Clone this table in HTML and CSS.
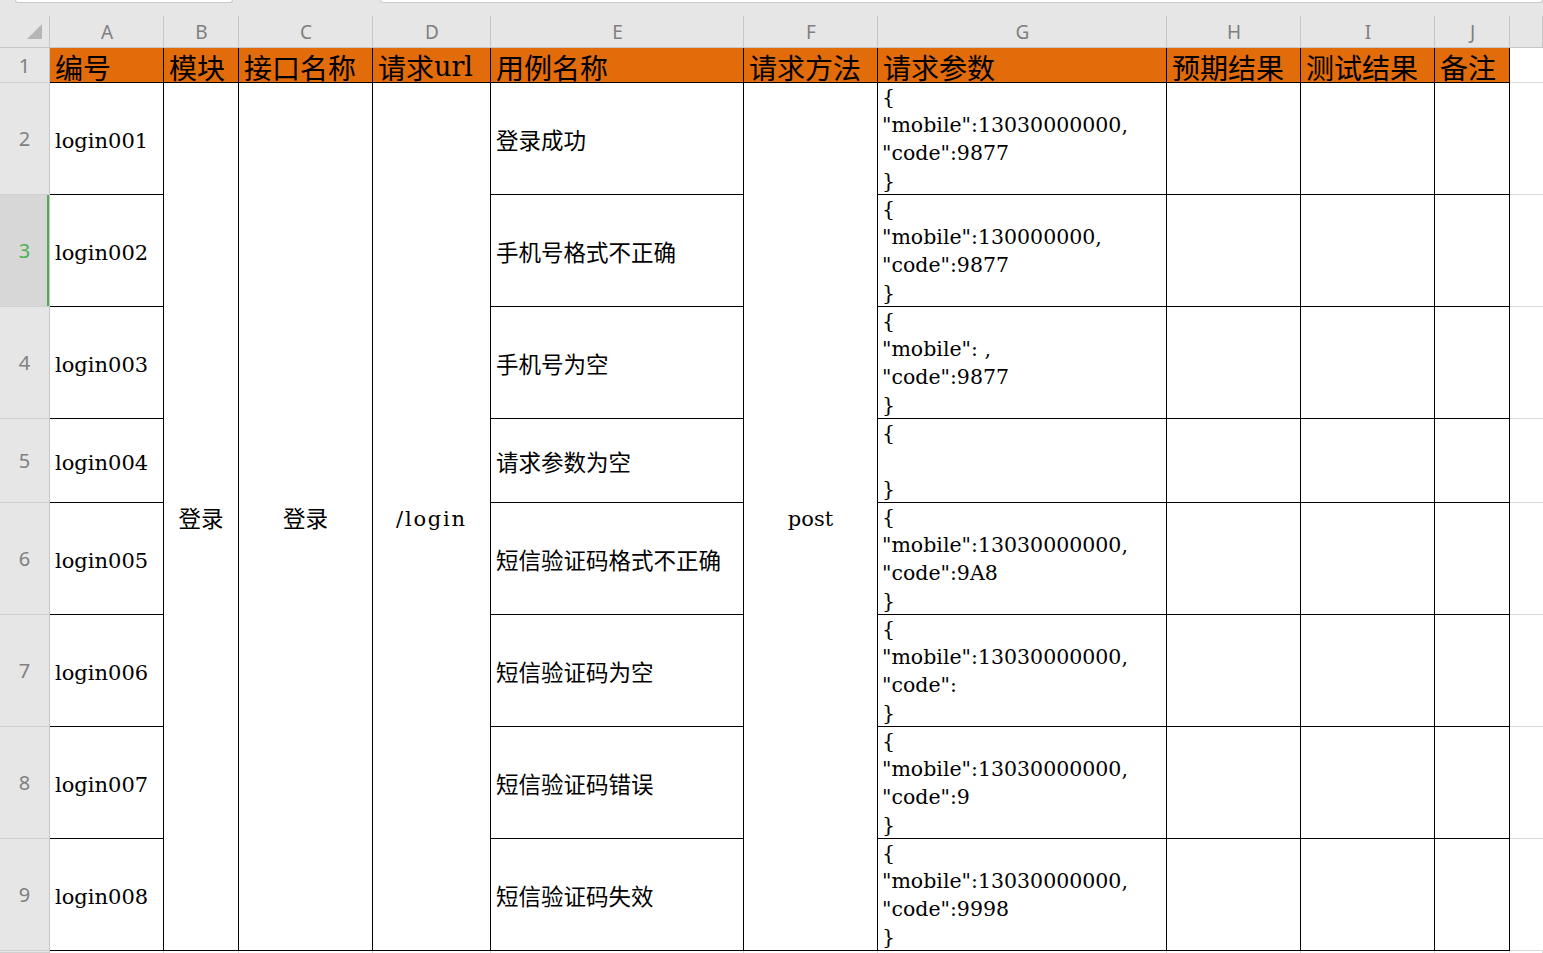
FILE: index.html
```html
<!DOCTYPE html>
<html lang="zh-CN">
<head>
<meta charset="utf-8">
<title>接口测试用例</title>
<link rel="stylesheet" href="styles.css">
</head>
<body>
<div class="topbar"><div class="tb tb1"></div><div class="tb tb2"></div></div>
<div class="sheet">
  <div class="corner"><svg width="49" height="44" viewBox="0 0 49 44"><polygon points="42,21 42,36 27,36" fill="#b6b6b6"/></svg></div>
  <div class="ch">A</div><div class="ch">B</div><div class="ch">C</div><div class="ch">D</div><div class="ch">E</div>
  <div class="ch">F</div><div class="ch">G</div><div class="ch">H</div><div class="ch">I</div><div class="ch">J</div><div class="ch"></div>

  <div class="rh">1</div>
  <div class="c hd">编号</div>
  <div class="c hd">模块</div>
  <div class="c hd">接口名称</div>
  <div class="c hd">请求<span class="hu">url</span></div>
  <div class="c hd">用例名称</div>
  <div class="c hd">请求方法</div>
  <div class="c hd">请求参数</div>
  <div class="c hd">预期结果</div>
  <div class="c hd">测试结果</div>
  <div class="c hd">备注</div>
  <div class="x"></div>

  <div class="rh">2</div>
  <div class="c lat">login001</div>
  <div class="c m cjk">登录</div>
  <div class="c m cjk">登录</div>
  <div class="c m lat wide">/login</div>
  <div class="c cjk">登录成功</div>
  <div class="c m lat">post</div>
  <div class="c js">{<br>"mobile":13030000000,<br>"code":9877<br>}</div>
  <div class="c"></div><div class="c"></div><div class="c"></div><div class="x"></div>

  <div class="rh sel">3</div>
  <div class="c lat">login002</div>
  <div class="c cjk">手机号格式不正确</div>
  <div class="c js">{<br>"mobile":130000000,<br>"code":9877<br>}</div>
  <div class="c"></div><div class="c"></div><div class="c"></div><div class="x"></div>

  <div class="rh">4</div>
  <div class="c lat">login003</div>
  <div class="c cjk">手机号为空</div>
  <div class="c js">{<br>"mobile": ,<br>"code":9877<br>}</div>
  <div class="c"></div><div class="c"></div><div class="c"></div><div class="x"></div>

  <div class="rh">5</div>
  <div class="c lat">login004</div>
  <div class="c cjk">请求参数为空</div>
  <div class="c js">{<br><br>}</div>
  <div class="c"></div><div class="c"></div><div class="c"></div><div class="x"></div>

  <div class="rh">6</div>
  <div class="c lat">login005</div>
  <div class="c cjk">短信验证码格式不正确</div>
  <div class="c js">{<br>"mobile":13030000000,<br>"code":9A8<br>}</div>
  <div class="c"></div><div class="c"></div><div class="c"></div><div class="x"></div>

  <div class="rh">7</div>
  <div class="c lat">login006</div>
  <div class="c cjk">短信验证码为空</div>
  <div class="c js">{<br>"mobile":13030000000,<br>"code":<br>}</div>
  <div class="c"></div><div class="c"></div><div class="c"></div><div class="x"></div>

  <div class="rh">8</div>
  <div class="c lat">login007</div>
  <div class="c cjk">短信验证码错误</div>
  <div class="c js">{<br>"mobile":13030000000,<br>"code":9<br>}</div>
  <div class="c"></div><div class="c"></div><div class="c"></div><div class="x"></div>

  <div class="rh">9</div>
  <div class="c lat">login008</div>
  <div class="c cjk">短信验证码失效</div>
  <div class="c js">{<br>"mobile":13030000000,<br>"code":9998<br>}</div>
  <div class="c"></div><div class="c"></div><div class="c"></div><div class="x"></div>

  <div class="rh"></div>
  <div class="b"></div><div class="b"></div><div class="b"></div><div class="b"></div><div class="b"></div>
  <div class="b"></div><div class="b"></div><div class="b"></div><div class="b"></div><div class="b"></div><div class="b"></div>
</div>
</body>
</html>
```

FILE: styles.css
```css
html, body {
  margin: 0;
  padding: 0;
}
body {
  width: 1543px;
  height: 953px;
  overflow: hidden;
  background: #ffffff;
  font-family: "Noto Sans", "Noto Sans CJK SC", sans-serif;
  color: #000;
}
.topbar {
  height: 3px;
  display: flex;
  background: #e6e6e6;
}
.tb {
  box-sizing: border-box;
  height: 3px;
  background: #ffffff;
  border: 1px solid #c9c9c9;
  border-top: 0;
  border-radius: 0 0 4px 4px;
}
.tb1 {
  margin-left: 15px;
  width: 218px;
}
.tb2 {
  margin-left: 147px;
  flex: 1;
}
.sheet {
  display: grid;
  grid-template-columns: 50px 114px 75px 134px 118px 253px 134px 289px 134px 134px 75px 33px;
  grid-template-rows: 45px 35px 112px 112px 112px 84px 112px 112px 112px 112px 2px;
}
.sheet > div {
  box-sizing: border-box;
  min-width: 0;
}
.corner {
  background: #e6e6e6 linear-gradient(#c6c6c6, #c6c6c6) no-repeat right bottom / 1px 31px;
  border-bottom: 1px solid #c6c6c6;
}
.corner svg {
  display: block;
}
.ch {
  background: #e6e6e6 linear-gradient(#c6c6c6, #c6c6c6) no-repeat right bottom / 1px 31px;
  border-bottom: 1px solid #c6c6c6;
  display: flex;
  justify-content: center;
  align-items: center;
  padding-top: 13px;
  font-family: "Noto Sans", sans-serif;
  font-size: 19px;
  color: #7f7f7f;
}
.rh {
  background: #e6e6e6;
  border-right: 1px solid #c6c6c6;
  border-bottom: 1px solid #d0d0d0;
  display: flex;
  justify-content: center;
  align-items: center;
  font-family: "Noto Sans", sans-serif;
  font-size: 20px;
  color: #808080;
}
.rh.sel {
  background: #d7d7d7;
  color: #4caf50;
  box-shadow: inset -2px 0 0 #4caf50;
}
.c {
  background: #ffffff;
  border-right: 1px solid #000;
  border-bottom: 1px solid #000;
  display: flex;
  align-items: center;
  padding-left: 5px;
  white-space: nowrap;
}
.hd {
  background: #e26b0a;
  align-items: center;
  padding-top: 4px;
  font-family: "Noto Sans CJK SC", sans-serif;
  font-size: 28px;
  line-height: 30px;
}
.hu {
  font-family: "DejaVu Serif", "Liberation Serif", serif;
  font-size: 27px;
}
.x {
  background: #ffffff;
  border-bottom: 1px solid #dadada;
}
.b {
  background: #ffffff;
  border-right: 1px solid #dadada;
}
.lat {
  font-family: "DejaVu Serif", "Liberation Serif", serif;
  font-size: 21px;
  padding-top: 4px;
}
.wide {
  letter-spacing: 1.8px;
}
.cjk {
  font-family: "Noto Sans CJK SC", sans-serif;
  font-size: 22.5px;
}
.m {
  grid-row: span 8;
  justify-content: center;
  padding-left: 0;
}
.js {
  display: block;
  padding-left: 4px;
  overflow: hidden;
  font-family: "DejaVu Serif", "Liberation Serif", serif;
  font-size: 20.5px;
  line-height: 28px;
}
```
